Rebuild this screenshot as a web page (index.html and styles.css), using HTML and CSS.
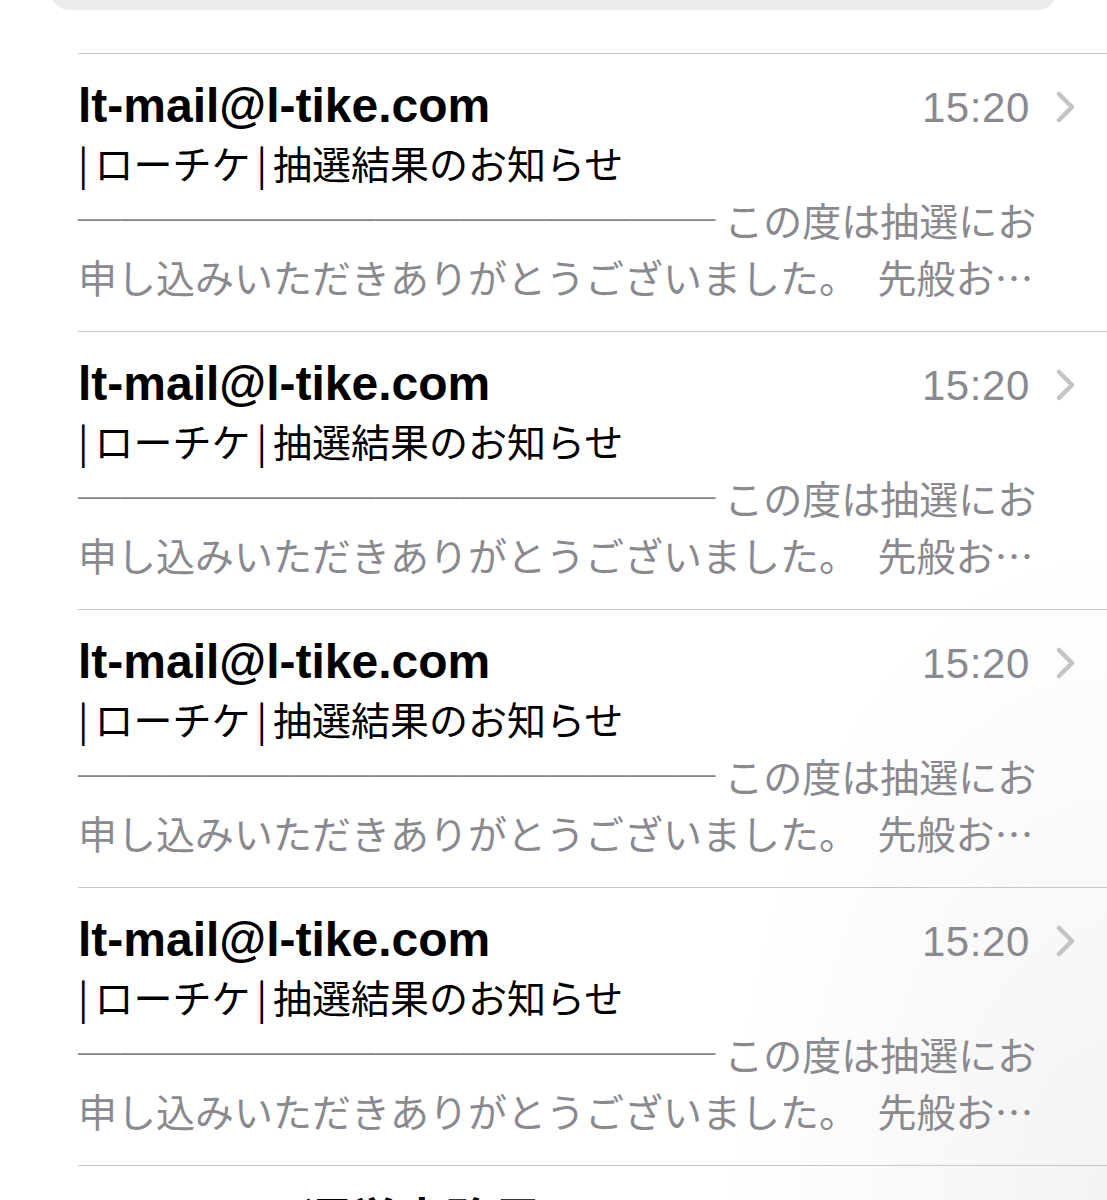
FILE: index.html
```html
<!DOCTYPE html>
<html>
<head>
<meta charset="utf-8">
<link rel="stylesheet" href="styles.css">
</head>
<body>

<div class="search-area">
  <div class="search-clip">
    <div class="search"></div>
  </div>
</div>

<ul class="mail-list">
  <li class="mail">
    <div class="mail-head">
      <span class="sender">lt-mail@l-tike.com</span>
      <span class="time">15:20</span>
      <svg class="chevron" viewBox="0 0 19 32"><path d="M3 3 L16 16 L3 29"/></svg>
    </div>
    <div class="subject"><span class="bar">|</span>ローチケ<span class="bar">|</span>抽選結果のお知らせ</div>
    <div class="preview"><span class="rule">───────────────</span> この度は抽選にお<br>申し込みいただきありがとうございました。　先般お…</div>
  </li>
  <li class="mail">
    <div class="mail-head">
      <span class="sender">lt-mail@l-tike.com</span>
      <span class="time">15:20</span>
      <svg class="chevron" viewBox="0 0 19 32"><path d="M3 3 L16 16 L3 29"/></svg>
    </div>
    <div class="subject"><span class="bar">|</span>ローチケ<span class="bar">|</span>抽選結果のお知らせ</div>
    <div class="preview"><span class="rule">───────────────</span> この度は抽選にお<br>申し込みいただきありがとうございました。　先般お…</div>
  </li>
  <li class="mail">
    <div class="mail-head">
      <span class="sender">lt-mail@l-tike.com</span>
      <span class="time">15:20</span>
      <svg class="chevron" viewBox="0 0 19 32"><path d="M3 3 L16 16 L3 29"/></svg>
    </div>
    <div class="subject"><span class="bar">|</span>ローチケ<span class="bar">|</span>抽選結果のお知らせ</div>
    <div class="preview"><span class="rule">───────────────</span> この度は抽選にお<br>申し込みいただきありがとうございました。　先般お…</div>
  </li>
  <li class="mail">
    <div class="mail-head">
      <span class="sender">lt-mail@l-tike.com</span>
      <span class="time">15:20</span>
      <svg class="chevron" viewBox="0 0 19 32"><path d="M3 3 L16 16 L3 29"/></svg>
    </div>
    <div class="subject"><span class="bar">|</span>ローチケ<span class="bar">|</span>抽選結果のお知らせ</div>
    <div class="preview"><span class="rule">───────────────</span> この度は抽選にお<br>申し込みいただきありがとうございました。　先般お…</div>
  </li>
</ul>

<div class="next-row">LAWSON 運営事務局</div>

</body>
</html>
```

FILE: styles.css
```css
html, body {
  height: 1200px;
  overflow: hidden;
}

body {
  margin: 0;
  font-family: "Liberation Sans", "Noto Sans CJK JP", sans-serif;
  color: #000;
  background: radial-gradient(ellipse 380px 650px at 100% 100%, #f3f3f3 0%, #ffffff 100%);
  background-color: #fff;
}

.search-area {
  height: 53px;
}

.search-clip {
  height: 10px;
  overflow: hidden;
  margin: 0 50px;
  display: flex;
  align-items: flex-end;
}

.search {
  flex: 1;
  height: 40px;
  border-radius: 20px;
  background-color: #ebebed;
}

.mail-list {
  list-style: none;
  margin: 0;
  padding: 0;
}

.mail {
  margin-left: 78px;
  padding: 24px 32px 26px 0;
  border-top: 1px solid #c8c8cc;
}

.mail-head {
  display: flex;
  align-items: center;
  height: 56px;
}

.sender {
  flex: 1;
  font-size: 48px;
  font-weight: bold;
  line-height: 56px;
  white-space: nowrap;
}

.time {
  font-size: 42px;
  letter-spacing: 0.6px;
  color: #8a8a8e;
  line-height: 56px;
  padding-top: 4px;
}

.chevron {
  width: 19px;
  height: 32px;
  margin-left: 26px;
  margin-top: 2px;
}

.chevron path {
  fill: none;
  stroke: #c4c4c7;
  stroke-width: 4.5;
  stroke-linecap: round;
  stroke-linejoin: round;
}

.subject {
  font-family: "Noto Sans CJK JP", sans-serif;
  font-size: 39px;
  line-height: 57px;
  white-space: nowrap;
}

.bar {
  margin: 0 6px;
}

.bar:first-child {
  margin-left: 0;
}

.preview {
  font-family: "Noto Sans CJK JP", sans-serif;
  font-size: 39px;
  line-height: 57px;
  color: #8a8a8e;
  white-space: nowrap;
}

.rule {
  font-size: 42.5px;
  font-weight: bold;
  line-height: 0;
  color: #858588;
}

.next-row {
  margin-left: 78px;
  padding-top: 28px;
  border-top: 1px solid #c8c8cc;
  font-size: 48px;
  font-weight: bold;
  line-height: 56px;
  white-space: nowrap;
}
```
